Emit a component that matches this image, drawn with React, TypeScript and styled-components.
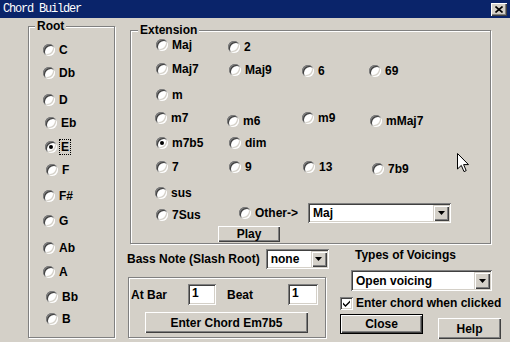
import styled, { createGlobalStyle } from "styled-components";

const GlobalStyle = createGlobalStyle`
  html, body {
    margin: 0;
    padding: 0;
    background: #d4d0c8;
  }
`;

const raised = `
  box-shadow: inset 1px 1px 0 #fff, inset -1px -1px 0 #404040, inset -2px -2px 0 #808080;
`;
const sunken = `
  box-shadow: inset 1px 1px 0 #808080, inset -1px -1px 0 #fff, inset 2px 2px 0 #404040, inset -2px -2px 0 #d4d0c8;
`;

const Window = styled.div`
  position: relative;
  width: 510px;
  height: 342px;
  overflow: hidden;
  background: #d4d0c8;
  display: flex;
  flex-direction: column;
  font: bold 12px "Liberation Sans", Arial, sans-serif;
  line-height: 14px;
  color: #000;
`;

const TitleBar = styled.div`
  height: 18px;
  flex: none;
  background: #0a246a;
  display: flex;
  align-items: center;
  justify-content: space-between;
  padding: 0 3px 0 3px;
`;

const Title = styled.span`
  font: 12px "Liberation Mono", "Courier New", monospace;
  letter-spacing: -1.2px;
  color: #fff;
`;

const TitleClose = styled.div`
  width: 16px;
  height: 13px;
  background: #d4d0c8;
  display: flex;
  align-items: center;
  justify-content: center;
  ${raised}
`;

const Body = styled.div`
  display: flex;
  align-items: flex-start;
  padding: 1px 0 0 28px;
`;

const Group = styled.fieldset<{ $w: number; $h: number }>`
  box-sizing: border-box;
  width: ${(p) => p.$w}px;
  height: ${(p) => p.$h}px;
  min-inline-size: 0;
  margin: 0;
  padding: 0;
  border: 1px solid #808080;
  box-shadow: inset 1px 1px 0 #fff, 1px 1px 0 #fff;
`;

const ExtGroup = styled(Group)`
  margin: 4px 0 0 3px;
`;

const Legend = styled.legend<{ $x: number }>`
  margin-left: ${(p) => p.$x}px;
  padding: 0 2px;
  background: #d4d0c8;
  line-height: 14px;
`;

const RootList = styled.div`
  display: flex;
  flex-direction: column;
`;

const RadioItem = styled.label<{ $dx: number; $dy: number }>`
  display: flex;
  align-items: center;
  gap: 3px;
  height: 14px;
  margin-left: ${(p) => p.$dx}px;
  margin-top: ${(p) => p.$dy}px;
  white-space: nowrap;
`;

const RadioDot = styled.span<{ $on: boolean }>`
  flex: none;
  width: 12px;
  height: 12px;
  border-radius: 50%;
  background: #fff;
  display: flex;
  align-items: center;
  justify-content: center;
  box-shadow: inset 1px 1px 0 #808080, inset -1px -1px 0 #fff, inset 2px 2px 0 #404040,
    inset -2px -2px 0 #d4d0c8;

  &::after {
    content: "";
    width: 4px;
    height: 4px;
    border-radius: 50%;
    background: ${(p) => (p.$on ? "#000" : "transparent")};
  }
`;

const RadioText = styled.span<{ $focus: boolean }>`
  padding: 0 1px;
  outline: ${(p) => (p.$focus ? "1px dotted #000" : "none")};
  outline-offset: 0;
`;

const RightCol = styled.div`
  margin-left: 12px;
  display: flex;
  flex-direction: column;
`;

const ExtGrid = styled.div`
  display: grid;
  grid-template-columns: 73px 73px 68px 1fr;
  grid-template-rows: 24px 26px 23px 25px 24px 26px 16px 24px 16px;
  padding: 1px 0 0 25px;
`;

const Cell = styled.div<{ $col: number; $row: number; $span?: number }>`
  grid-column: ${(p) => p.$col} / span ${(p) => p.$span ?? 1};
  grid-row: ${(p) => p.$row};
  display: flex;
  align-items: flex-start;
`;

const Button = styled.button<{ $w: number; $h: number; $default?: boolean }>`
  box-sizing: border-box;
  width: ${(p) => p.$w}px;
  height: ${(p) => p.$h}px;
  padding: 0;
  border: ${(p) => (p.$default ? "1px solid #000" : "none")};
  background: #d4d0c8;
  font: inherit;
  line-height: 14px;
  color: #000;
  ${raised}
`;

const PlayButton = styled(Button)`
  margin-left: 62px;
`;

const ChordButton = styled(Button)`
  margin: 7px 0 0 16px;
`;

const HelpButton = styled(Button)`
  margin-top: 4px;
`;

const Combo = styled.div<{ $w: number; $h: number; $x?: number; $y?: number }>`
  box-sizing: border-box;
  width: ${(p) => p.$w}px;
  height: ${(p) => p.$h}px;
  margin-left: ${(p) => p.$x ?? 0}px;
  margin-top: ${(p) => p.$y ?? 0}px;
  background: #fff;
  display: flex;
  align-items: center;
  justify-content: space-between;
  padding: 2px 2px 2px 5px;
  ${sunken}
`;

const DropButton = styled.span`
  box-sizing: border-box;
  width: 16px;
  align-self: stretch;
  background: #d4d0c8;
  display: flex;
  align-items: center;
  justify-content: center;
  box-shadow: inset 1px 1px 0 #d4d0c8, inset 2px 2px 0 #fff, inset -1px -1px 0 #404040,
    inset -2px -2px 0 #808080;
`;

const Bottom = styled.div`
  display: flex;
  align-items: flex-start;
`;

const LeftStack = styled.div`
  width: 204px;
  display: flex;
  flex-direction: column;
`;

const BassRow = styled.div`
  margin-top: 5px;
  display: flex;
  align-items: center;
  gap: 6px;
`;

const Frame = styled.div`
  box-sizing: border-box;
  margin: 8px 0 0 1px;
  width: 198px;
  height: 61px;
  border: 1px solid #808080;
  box-shadow: inset 1px 1px 0 #fff, 1px 1px 0 #fff;
  display: flex;
  flex-direction: column;
  align-items: flex-start;
  padding: 6px 0 0 0;
`;

const FieldRow = styled.div`
  display: flex;
  align-items: center;
`;

const FieldLabel = styled.span<{ $w: number; $x?: number }>`
  width: ${(p) => p.$w}px;
  margin-left: ${(p) => p.$x ?? 0}px;
`;

const TextBox = styled.div<{ $w: number }>`
  box-sizing: border-box;
  width: ${(p) => p.$w}px;
  height: 21px;
  background: #fff;
  padding: 2px 4px;
  ${sunken}
`;

const RightStack = styled.div`
  margin-left: 9px;
  display: flex;
  flex-direction: column;
  align-items: flex-start;
`;

const Caption = styled.span`
  margin: 4px 0 0 15px;
`;

const CheckRow = styled.div`
  margin-top: 5px;
  display: flex;
  align-items: center;
  gap: 3px;
`;

const CheckBox = styled.span`
  box-sizing: border-box;
  width: 13px;
  height: 13px;
  background: #fff;
  display: flex;
  align-items: center;
  justify-content: center;
  ${sunken}
`;

const ButtonRow = styled.div`
  margin-top: 4px;
  display: flex;
  align-items: flex-start;
  gap: 15px;
`;

const Pointer = styled.svg`
  position: absolute;
  left: 457px;
  top: 153px;
`;

const Arrow = () => (
  <svg width="7" height="4" viewBox="0 0 7 4">
    <path d="M0 0h7L3.5 4z" fill="#000" />
  </svg>
);

function Radio({
  label,
  on = false,
  focus = false,
  dx = 0,
  dy = 0,
}: {
  label: string;
  on?: boolean;
  focus?: boolean;
  dx?: number;
  dy?: number;
}) {
  return (
    <RadioItem $dx={dx} $dy={dy}>
      <RadioDot $on={on} />
      <RadioText $focus={focus}>{label}</RadioText>
    </RadioItem>
  );
}

function DropDown(props: { value: string; w: number; h: number; x?: number; y?: number }) {
  return (
    <Combo $w={props.w} $h={props.h} $x={props.x} $y={props.y}>
      <span>{props.value}</span>
      <DropButton>
        <Arrow />
      </DropButton>
    </Combo>
  );
}

const roots = [
  { n: "C", x: 43, y: 50 },
  { n: "Db", x: 43, y: 73 },
  { n: "D", x: 43, y: 100 },
  { n: "Eb", x: 45, y: 123 },
  { n: "E", x: 45, y: 147 },
  { n: "F", x: 46, y: 170 },
  { n: "F#", x: 43, y: 196 },
  { n: "G", x: 43, y: 221 },
  { n: "Ab", x: 43, y: 248 },
  { n: "A", x: 43, y: 272 },
  { n: "Bb", x: 46, y: 297 },
  { n: "B", x: 46, y: 319 },
];

// label, col, row, x nudge, y nudge
const extensions: [string, number, number, number, number][] = [
  ["Maj", 1, 1, 0, 0],
  ["2", 2, 1, -1, 2],
  ["Maj7", 1, 2, 0, 0],
  ["Maj9", 2, 2, 0, 1],
  ["6", 3, 2, 0, 2],
  ["69", 4, 2, -1, 2],
  ["m", 1, 3, 0, 0],
  ["m7", 1, 4, -1, 0],
  ["m6", 2, 4, -2, 3],
  ["m9", 3, 4, 0, 0],
  ["mMaj7", 4, 4, 0, 3],
  ["m7b5", 1, 5, 0, 0],
  ["dim", 2, 5, 0, 0],
  ["7", 1, 6, 0, 0],
  ["9", 2, 6, 0, 0],
  ["13", 3, 6, 1, 0],
  ["7b9", 4, 6, 2, 2],
  ["sus", 1, 7, -1, 0],
  ["7Sus", 1, 8, 0, 6],
];

export default function App() {
  return (
    <Window>
      <GlobalStyle />
      <TitleBar>
        <Title>Chord Builder</Title>
        <TitleClose>
          <svg width="8" height="7" viewBox="0 0 8 7">
            <path d="M0.5 0.5L7.5 6.5M7.5 0.5L0.5 6.5" stroke="#000" strokeWidth="1.6" />
          </svg>
        </TitleClose>
      </TitleBar>

      <Body>
        <Group $w={87} $h={319}>
          <Legend $x={6}>Root</Legend>
          <RootList>
            {roots.map((r, i) => (
              <Radio
                key={r.n}
                label={r.n}
                on={r.n === "E"}
                focus={r.n === "E"}
                dx={r.x - 29}
                dy={i === 0 ? 10 : r.y - roots[i - 1].y - 14}
              />
            ))}
          </RootList>
        </Group>

        <RightCol>
          <ExtGroup $w={361} $h={221}>
            <Legend $x={7}>Extension</Legend>
            <ExtGrid>
              {extensions.map(([label, col, row, dx, dy]) => (
                <Cell key={label} $col={col} $row={row}>
                  <Radio label={label} on={label === "m7b5"} dx={dx} dy={dy} />
                </Cell>
              ))}
              <Cell $col={2} $row={8} $span={3}>
                <Radio label="Other->" dx={10} dy={4} />
                <DropDown value="Maj" w={143} h={20} x={9} y={1} />
              </Cell>
              <Cell $col={1} $row={9} $span={2}>
                <PlayButton $w={62} $h={16}>
                  Play
                </PlayButton>
              </Cell>
            </ExtGrid>
          </ExtGroup>

          <Bottom>
            <LeftStack>
              <BassRow>
                <span>Bass Note (Slash Root)</span>
                <DropDown value="none" w={63} h={20} />
              </BassRow>
              <Frame>
                <FieldRow>
                  <FieldLabel $w={57} $x={2}>
                    At Bar
                  </FieldLabel>
                  <TextBox $w={28}>1</TextBox>
                  <FieldLabel $w={61} $x={11}>
                    Beat
                  </FieldLabel>
                  <TextBox $w={30}>1</TextBox>
                </FieldRow>
                <ChordButton $w={163} $h={21}>
                  Enter Chord Em7b5
                </ChordButton>
              </Frame>
            </LeftStack>

            <RightStack>
              <Caption>Types of Voicings</Caption>
              <DropDown value="Open voicing" w={141} h={21} x={11} y={8} />
              <CheckRow>
                <CheckBox>
                  <svg width="7" height="7" viewBox="0 0 7 7">
                    <path d="M0 2.5L2.5 5L7 0.5V2.5L2.5 7L0 4.5Z" fill="#000" />
                  </svg>
                </CheckBox>
                <span>Enter chord when clicked</span>
              </CheckRow>
              <ButtonRow>
                <Button $w={83} $h={20} $default>
                  Close
                </Button>
                <HelpButton $w={63} $h={21}>
                  Help
                </HelpButton>
              </ButtonRow>
            </RightStack>
          </Bottom>
        </RightCol>
      </Body>

      <Pointer width="12" height="20" viewBox="0 0 12 20">
        <path d="M0.5 0.5V16L4.3 12.4L7 18.6L9.2 17.6L6.6 11.6H11.5Z" fill="#fff" stroke="#000" />
      </Pointer>
    </Window>
  );
}
